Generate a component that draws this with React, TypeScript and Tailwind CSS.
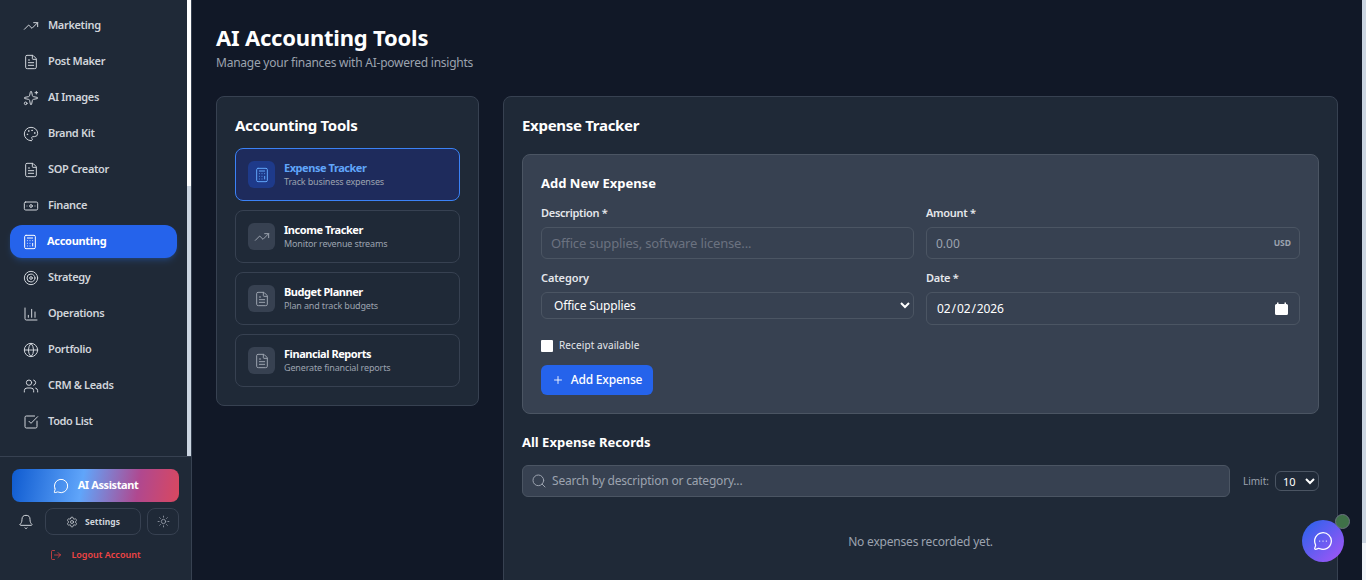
import {
  TrendingUp, FileText, Sparkles, Palette, Banknote, Calculator, Target, BarChart3, Globe, Users,
  SquareCheckBig, MessageCircle, MessageCircleMore, Bell, Settings, Sun, LogOut, Plus, Search,
} from 'lucide-react'

const navigation = [
  { name: 'Marketing', icon: TrendingUp },
  { name: 'Post Maker', icon: FileText },
  { name: 'AI Images', icon: Sparkles },
  { name: 'Brand Kit', icon: Palette },
  { name: 'SOP Creator', icon: FileText },
  { name: 'Finance', icon: Banknote },
  { name: 'Accounting', icon: Calculator, active: true },
  { name: 'Strategy', icon: Target },
  { name: 'Operations', icon: BarChart3 },
  { name: 'Portfolio', icon: Globe },
  { name: 'CRM & Leads', icon: Users },
  { name: 'Todo List', icon: SquareCheckBig },
]

const tools = [
  { name: 'Expense Tracker', sub: 'Track business expenses', icon: Calculator, active: true },
  { name: 'Income Tracker', sub: 'Monitor revenue streams', icon: TrendingUp },
  { name: 'Budget Planner', sub: 'Plan and track budgets', icon: FileText },
  { name: 'Financial Reports', sub: 'Generate financial reports', icon: FileText },
]

// Solid calendar glyph of the date field
const CalendarGlyph = () => (
  <svg width="13" height="13" viewBox="0 0 13 13" fill="#fff">
    <path d="M2 0.5h1.5v1.5h6V0.5H11V2h0.5A1.5 1.5 0 0 1 13 3.5v8a1.5 1.5 0 0 1-1.5 1.5h-10A1.5 1.5 0 0 1 0 11.5v-8A1.5 1.5 0 0 1 1.5 2H2z" />
  </svg>
)

function Sidebar() {
  return (
    <aside className="w-[192px] shrink-0 h-full flex flex-col bg-[#1f2937] border-r border-[#374151]">
      <div className="flex-1 min-h-0 flex">
        {/* Nav */}
        <nav className="flex-1 pt-[9px] pl-[10px] pr-[10px] flex flex-col gap-[3px]">
          {navigation.map((item) => (
            <a
              key={item.name}
              className={
                item.active
                  ? 'h-[33px] flex items-center gap-[9px] pl-[12px] rounded-xl bg-[#2563eb] text-white text-[11px] tracking-[-0.3px] font-bold shadow-md shadow-blue-500/20'
                  : 'h-[33px] flex items-center gap-[9px] pl-[13px] rounded-xl text-[#d1d5db] text-[11px] tracking-[-0.35px] font-semibold'
              }
            >
              <item.icon size={16} strokeWidth={1.5} />
              {item.name}
            </a>
          ))}
        </nav>
        {/* Scrollbar */}
        <div className="w-[4px] flex flex-col">
          <div className="h-[186px] bg-white" />
          <div className="flex-1 bg-[#cbd5e1]" />
        </div>
      </div>

      {/* Footer */}
      <div className="h-[124px] shrink-0 border-t border-[#374151] px-[12px] pt-[12px]">
        <button className="w-[167px] h-[33px] rounded-lg flex items-center justify-center gap-[9px] text-white text-[11px] tracking-[-0.4px] font-bold bg-[linear-gradient(100deg,#0f5bd0_0%,#60a5fa_42%,#b0488f_75%,#d9485f_100%)]">
          <MessageCircle size={16} strokeWidth={1.5} />
          AI Assistant
        </button>
        <div className="mt-[6px] flex items-center gap-[6px]">
          <div className="w-[27px] flex justify-center text-[#d1d5db]">
            <Bell size={16} strokeWidth={1.5} />
          </div>
          <button className="w-[96px] h-[27px] pt-[1px] rounded-lg border border-[#374151] flex items-center justify-center gap-[7px] text-[#d1d5db] text-[8.5px] font-bold">
            <Settings size={12} strokeWidth={1.5} />
            Settings
          </button>
          <button className="w-[32px] h-[27px] rounded-lg border border-[#374151] flex items-center justify-center text-[#9ca3af]">
            <Sun size={13} strokeWidth={1.5} />
          </button>
        </div>
        <div className="mt-[13px] flex items-center justify-center gap-[9px] text-[#ef4444] text-[9px] font-semibold">
          <LogOut size={12} strokeWidth={1.5} />
          Logout Account
        </div>
      </div>
    </aside>
  )
}

function ToolsCard() {
  return (
    <div className="w-[263px] shrink-0 self-start h-[310px] bg-[#1f2937] border border-[#374151] rounded-lg px-[18px] pt-[17px]">
      <h2 className="text-[15px] leading-[22px] tracking-[-0.3px] font-bold text-white mb-[12px]">Accounting Tools</h2>
      <div className="flex flex-col gap-[9px]">
        {tools.map((tool) => (
          <div
            key={tool.name}
            className={
              tool.active
                ? 'h-[53px] flex items-center gap-[9px] px-[12px] rounded-lg border border-[#3b82f6] bg-[#1e2b5c]'
                : 'h-[53px] flex items-center gap-[9px] px-[12px] rounded-lg border border-[#374151]'
            }
          >
            <div
              className={
                tool.active
                  ? 'w-[27px] h-[27px] rounded-md flex items-center justify-center bg-[#1e3a8a] text-[#60a5fa]'
                  : 'w-[27px] h-[27px] rounded-md flex items-center justify-center bg-[#374151] text-[#9ca3af]'
              }
            >
              <tool.icon size={16} strokeWidth={1.5} />
            </div>
            <div>
              <div className={tool.active ? 'text-[11px] leading-[14px] tracking-[-0.45px] font-bold text-[#60a5fa]' : 'text-[11px] leading-[14px] tracking-[-0.45px] font-bold text-white'}>
                {tool.name}
              </div>
              <div className="text-[9px] leading-[13px] tracking-[-0.15px] text-[#9ca3af]">{tool.sub}</div>
            </div>
          </div>
        ))}
      </div>
    </div>
  )
}

function ExpenseForm() {
  return (
    <div className="h-[260px] bg-[#374151] border border-[#4b5563] rounded-lg px-[18px] pt-[18px]">
      <h3 className="text-[13px] leading-[20px] font-bold text-white mb-[13px]">Add New Expense</h3>
      <div className="grid grid-cols-[373px_1fr] gap-x-[12px]">
        <div>
          <label className="block text-[11px] leading-[14px] tracking-[-0.3px] font-semibold text-[#e5e7eb] mb-[7px]">Description *</label>
          <input
            placeholder="Office supplies, software license..."
            className="w-full h-[32px] px-[9px] rounded-md border border-[#4b5563] bg-transparent text-[13px] tracking-[-0.15px] text-white placeholder:text-[#6b7280] outline-none"
          />
        </div>
        <div>
          <label className="block text-[11px] leading-[14px] tracking-[-0.3px] font-semibold text-[#e5e7eb] mb-[7px]">Amount *</label>
          <div className="relative">
            <input
              placeholder="0.00"
              className="w-full h-[32px] px-[9px] rounded-md border border-[#4b5563] bg-transparent text-[12px] text-white placeholder:text-[#9ca3af] outline-none"
            />
            <span className="absolute right-[9px] top-[11px] text-[8.5px] leading-[10px] font-bold text-[#9ca3af]">USD</span>
          </div>
        </div>
        <div className="mt-[12px]">
          <label className="block text-[11px] leading-[14px] tracking-[-0.1px] font-semibold text-[#e5e7eb] mb-[7px]">Category</label>
          <select className="w-full h-[27px] px-[8px] rounded-md border border-[#4b5563] bg-transparent text-[12px] tracking-[-0.15px] text-white outline-none [color-scheme:dark]">
            <option>Office Supplies</option>
          </select>
        </div>
        <div className="mt-[12px]">
          <label className="block text-[11px] leading-[14px] tracking-[-0.3px] font-semibold text-[#e5e7eb] mb-[7px]">Date *</label>
          <div className="relative">
            <input
              type="date"
              defaultValue="2026-02-02"
              className="w-full h-[33px] px-[9px] rounded-md border border-[#4b5563] bg-transparent text-[12px] tracking-[-0.1px] text-white outline-none [color-scheme:dark] [&::-webkit-calendar-picker-indicator]:opacity-0"
            />
            <span className="absolute right-[12px] top-[10px] pointer-events-none">
              <CalendarGlyph />
            </span>
          </div>
        </div>
      </div>
      <label className="mt-[13px] flex items-center gap-[6px] text-[10px] tracking-[0.1px] text-[#e5e7eb]">
        <input type="checkbox" className="w-[12px] h-[12px] appearance-none bg-white rounded-[1px]" />
        Receipt available
      </label>
      <button className="mt-[12px] w-[112px] h-[30px] rounded-md bg-[#2563eb] text-white text-[12px] tracking-[-0.2px] font-medium flex items-center justify-center gap-[7px]">
        <Plus size={12} strokeWidth={1.75} />
        Add Expense
      </button>
    </div>
  )
}

function ExpenseRecords() {
  return (
    <div className="mt-[18px]">
      <h3 className="text-[13px] leading-[20px] font-bold text-white mb-[13px]">All Expense Records</h3>
      <div className="flex items-center">
        <div className="flex-1 h-[32px] flex items-center gap-[5px] px-[8px] rounded-md border border-[#4b5563] bg-[#374151] text-[#9ca3af] text-[12px] tracking-[-0.2px]">
          <Search size={16} strokeWidth={1.5} />
          Search by description or category...
        </div>
        <span className="ml-[13px] text-[10px] text-[#9ca3af]">Limit:</span>
        <select className="ml-[6px] w-[44px] h-[20px] px-[3px] rounded-md border border-[#4b5563] bg-transparent text-[11px] text-white outline-none [color-scheme:dark]">
          <option>10</option>
        </select>
      </div>
      <p className="mt-[37px] text-center text-[12px] leading-[16px] tracking-[-0.2px] text-[#9ca3af]">No expenses recorded yet.</p>
    </div>
  )
}

export default function App() {
  return (
    <div className="relative h-screen overflow-hidden flex bg-[#111827] font-['Noto_Sans',sans-serif]">
      <Sidebar />
      <main className="flex-1 min-w-0 px-[24px] pt-[23px]">
        <h1 className="text-[22px] leading-[28px] tracking-[-0.2px] font-bold text-white">AI Accounting Tools</h1>
        <p className="mt-[4px] text-[12px] leading-[16px] tracking-[-0.24px] text-[#9ca3af]">Manage your finances with AI-powered insights</p>
        <div className="mt-[25px] flex gap-[24px]">
          <ToolsCard />
          <div className="flex-1 min-w-0 h-[600px] bg-[#1f2937] border border-[#374151] rounded-lg px-[18px] pt-[17px]">
            <h2 className="text-[15px] leading-[22px] tracking-[-0.3px] font-bold text-white mb-[18px]">Expense Tracker</h2>
            <ExpenseForm />
            <ExpenseRecords />
          </div>
        </div>
      </main>
      {/* Page scrollbar */}
      <div className="w-[4px] shrink-0 flex flex-col">
        <div className="h-[543px] bg-[#cbd5e1]" />
        <div className="flex-1 bg-[#f1f5f9]" />
      </div>

      {/* Chat launcher */}
      <button className="absolute left-[1302px] top-[520px] w-[42px] h-[42px] rounded-full flex items-center justify-center text-white bg-[linear-gradient(135deg,#2563eb,#a855f7)]">
        <MessageCircleMore size={20} strokeWidth={1.5} />
      </button>
      <div className="absolute left-[1335px] top-[514px] w-[15px] h-[15px] rounded-full bg-[#3f7048] border border-[#6b7280]" />
    </div>
  )
}
